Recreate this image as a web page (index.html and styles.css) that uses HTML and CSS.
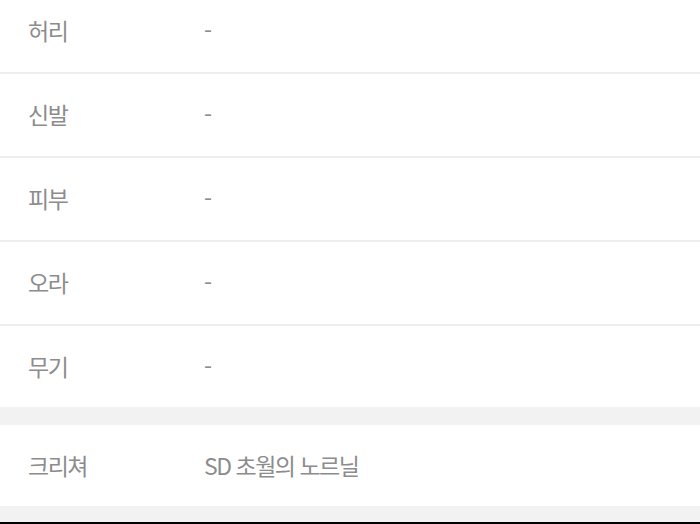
FILE: index.html
```html
<!DOCTYPE html>
<html lang="ko">
<head>
<meta charset="utf-8">
<link rel="stylesheet" href="styles.css">
</head>
<body>
<div class="page">
  <ul class="list first">
    <li class="row"><span class="label">허리</span><span class="value">-</span></li>
    <li class="row"><span class="label">신발</span><span class="value">-</span></li>
    <li class="row"><span class="label">피부</span><span class="value">-</span></li>
    <li class="row"><span class="label">오라</span><span class="value">-</span></li>
    <li class="row"><span class="label">무기</span><span class="value">-</span></li>
  </ul>
  <div class="gap"></div>
  <ul class="list">
    <li class="row"><span class="label">크리쳐</span><span class="value">SD 초월의 노르닐</span></li>
  </ul>
  <div class="gap bottom"></div>
  <div class="bar"></div>
</div>
</body>
</html>
```
FILE: styles.css
```css
html, body {
  margin: 0;
  padding: 0;
  background: #ffffff;
}
.page {
  width: 700px;
  height: 524px;
  overflow: hidden;
  font-family: "Noto Sans CJK KR", "Noto Sans", sans-serif;
  font-weight: 400;
  color: #8c8c8c;
}
.list {
  list-style: none;
  margin: 0;
  padding: 0;
}
.list.first {
  margin-top: -10px;
}
.row {
  display: flex;
  align-items: center;
  height: 80px;
  padding-bottom: 2px;
  border-bottom: 2px solid #eeeeee;
  box-sizing: content-box;
  font-size: 23px;
  letter-spacing: -1.5px;
}
.row:last-child {
  border-bottom: none;
  height: 79px;
}
.label {
  width: 176px;
  padding-left: 28px;
  flex: none;
}
.value {
  flex: 1;
}
.gap {
  height: 18px;
  background: #f2f2f2;
}
.gap.bottom {
  height: 16px;
}
.bar {
  height: 4px;
  background: #000000;
}
```
